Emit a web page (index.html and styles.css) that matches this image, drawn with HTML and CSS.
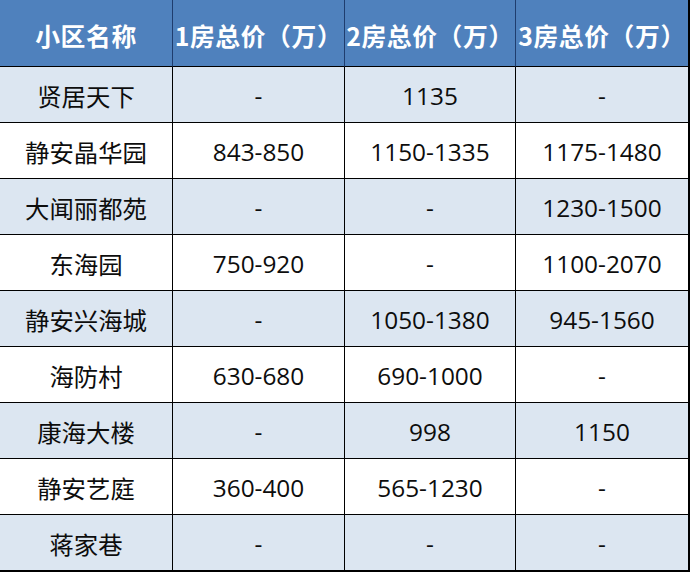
FILE: index.html
```html
<!DOCTYPE html>
<html lang="zh-CN">
<head>
<meta charset="utf-8">
<title>小区总价</title>
<link rel="stylesheet" href="styles.css">
</head>
<body>
<div class="table">
  <div class="cell head">小区名称</div>
  <div class="cell head">1房总价（万）</div>
  <div class="cell head">2房总价（万）</div>
  <div class="cell head last">3房总价（万）</div>

  <div class="cell alt">贤居天下</div>
  <div class="cell alt">-</div>
  <div class="cell alt">1135</div>
  <div class="cell alt last">-</div>

  <div class="cell">静安晶华园</div>
  <div class="cell">843-850</div>
  <div class="cell">1150-1335</div>
  <div class="cell last">1175-1480</div>

  <div class="cell alt">大闻丽都苑</div>
  <div class="cell alt">-</div>
  <div class="cell alt">-</div>
  <div class="cell alt last">1230-1500</div>

  <div class="cell">东海园</div>
  <div class="cell">750-920</div>
  <div class="cell">-</div>
  <div class="cell last">1100-2070</div>

  <div class="cell alt">静安兴海城</div>
  <div class="cell alt">-</div>
  <div class="cell alt">1050-1380</div>
  <div class="cell alt last">945-1560</div>

  <div class="cell">海防村</div>
  <div class="cell">630-680</div>
  <div class="cell">690-1000</div>
  <div class="cell last">-</div>

  <div class="cell alt">康海大楼</div>
  <div class="cell alt">-</div>
  <div class="cell alt">998</div>
  <div class="cell alt last">1150</div>

  <div class="cell">静安艺庭</div>
  <div class="cell">360-400</div>
  <div class="cell">565-1230</div>
  <div class="cell last">-</div>

  <div class="cell alt bottom">蒋家巷</div>
  <div class="cell alt bottom">-</div>
  <div class="cell alt bottom">-</div>
  <div class="cell alt bottom last">-</div>
</div>
</body>
</html>
```

FILE: styles.css
```css
html, body {
  margin: 0;
  padding: 0;
  background: #ffffff;
}

.table {
  display: grid;
  grid-template-columns: 173px 172px 171px 174px;
  grid-template-rows: 67px repeat(8, 56px) 57px;
  width: 690px;
  font-family: "Open Sans", "Noto Sans CJK SC", sans-serif;
  font-size: 24.4px;
  color: #0d0d0d;
}

.cell {
  box-sizing: border-box;
  display: flex;
  align-items: center;
  justify-content: center;
  border-right: 1px solid #000000;
  border-bottom: 1px solid #000000;
  background: #ffffff;
  white-space: nowrap;
  padding-top: 1px;
}

.cell.alt {
  background: #dce6f1;
}

.cell.head {
  background: #4f81bd;
  color: #ffffff;
  font-weight: bold;
  font-family: "Noto Sans CJK SC", sans-serif;
  font-size: 24.8px;
  letter-spacing: 0.6px;
  border-right-color: #1f3d6e;
  padding-top: 3px;
}

.cell.last {
  border-right: 2px solid #000000;
}

.cell.head.last {
  border-right: 2px solid #000000;
}

.cell.bottom {
  border-bottom: 2px solid #000000;
}
```
